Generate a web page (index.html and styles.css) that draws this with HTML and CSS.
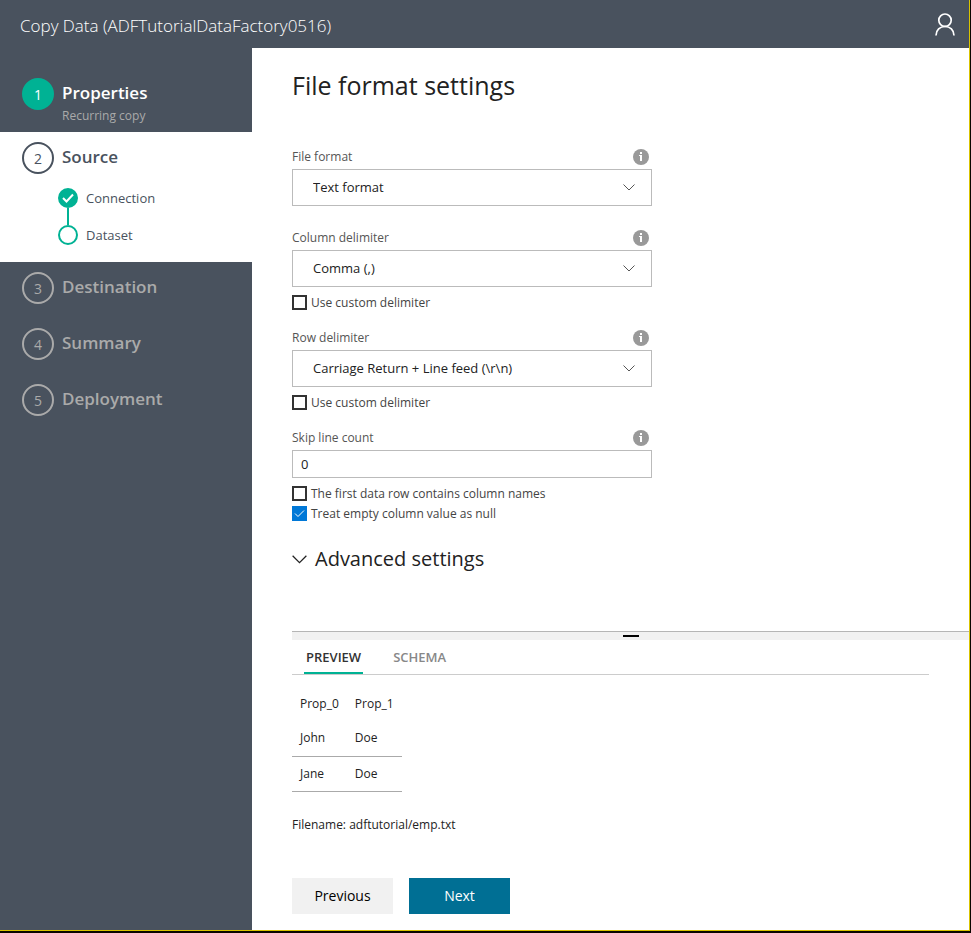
FILE: index.html
```html
<!DOCTYPE html>
<html lang="en">
<head>
<meta charset="utf-8">
<title>Copy Data</title>
<link rel="stylesheet" href="styles.css">
</head>
<body>
<svg class="sprite" aria-hidden="true">
  <symbol id="info" viewBox="0 0 16 16"><circle cx="8" cy="8" r="8" fill="#999"/><rect x="7" y="3" width="2" height="2" fill="#fff"/><path d="M6 6h3v6H7V7H6z" fill="#fff"/></symbol>
  <symbol id="chevron" viewBox="0 0 12 7"><path d="M.5.5 6 6 11.500.5" fill="none" stroke="currentColor"/></symbol>
</svg>
<div class="window">
  <header class="topbar">
    <div class="topbar-title">Copy Data (ADFTutorialDataFactory0516)</div>
    <button class="user" type="button" aria-label="Account">
      <svg width="20" height="23" viewBox="0 0 20 23" fill="none" stroke="#fff" stroke-width="1.700"><circle cx="10" cy="7.200" r="6.200"/><path d="M1 22.500c0-5.500 4-9 9-9s9 3.500 9 9"/></svg>
    </button>
  </header>
  <div class="body">
    <nav class="sidebar" aria-label="Steps">
      <ol class="steps">
        <li class="step done"><span class="num">1</span><div class="step-text"><div class="step-name">Properties</div><div class="step-note">Recurring copy</div></div></li>
        <li class="step current"><span class="num">2</span><div class="step-text"><div class="step-name">Source</div>
          <ul class="substeps">
            <li class="substep checked"><span class="dot"><svg width="12" height="10" viewBox="0 0 12 10"><path d="M1 5l3.500 3.500L11 1.500" fill="none" stroke="#fff" stroke-width="2"/></svg></span>Connection</li>
            <li class="substep"><span class="dot"></span>Dataset</li>
          </ul></div></li>
        <li class="step"><span class="num">3</span><div class="step-text"><div class="step-name">Destination</div></div></li>
        <li class="step"><span class="num">4</span><div class="step-text"><div class="step-name">Summary</div></div></li>
        <li class="step"><span class="num">5</span><div class="step-text"><div class="step-name">Deployment</div></div></li>
      </ol>
    </nav>
    <main class="content">
      <h1>File format settings</h1>
      <form class="form">
        <div class="field">
          <div class="field-head"><label for="format">File format</label><svg class="info"><use href="#info"/></svg></div>
          <div class="select"><select id="format"><option>Text format</option></select><svg class="chevron"><use href="#chevron"/></svg></div>
        </div>
        <div class="field">
          <div class="field-head"><label for="column">Column delimiter</label><svg class="info"><use href="#info"/></svg></div>
          <div class="select"><select id="column"><option>Comma (,)</option></select><svg class="chevron"><use href="#chevron"/></svg></div>
          <div class="checks"><label class="check"><input type="checkbox">Use custom delimiter</label></div>
        </div>
        <div class="field">
          <div class="field-head"><label for="row">Row delimiter</label><svg class="info"><use href="#info"/></svg></div>
          <div class="select"><select id="row"><option>Carriage Return + Line feed (\r\n)</option></select><svg class="chevron"><use href="#chevron"/></svg></div>
          <div class="checks"><label class="check"><input type="checkbox">Use custom delimiter</label></div>
        </div>
        <div class="field">
          <div class="field-head"><label for="skip">Skip line count</label><svg class="info"><use href="#info"/></svg></div>
          <input class="text" id="skip" type="text" value="0">
          <div class="checks">
            <label class="check"><input type="checkbox">The first data row contains column names</label>
            <label class="check"><input type="checkbox" checked>Treat empty column value as null</label>
          </div>
        </div>
        <button class="advanced" type="button"><svg class="advanced-chevron"><use href="#chevron"/></svg>Advanced settings</button>
      </form>
      <div class="splitter"><span class="grip"></span></div>
      <section class="preview">
        <div class="tabs" role="tablist">
          <button class="tab active" type="button" role="tab" aria-selected="true">PREVIEW</button>
          <button class="tab" type="button" role="tab" aria-selected="false">SCHEMA</button>
        </div>
        <table>
          <thead><tr><th>Prop_0</th><th>Prop_1</th></tr></thead>
          <tbody><tr><td>John</td><td>Doe</td></tr><tr><td>Jane</td><td>Doe</td></tr></tbody>
        </table>
        <p class="filename">Filename: adftutorial/emp.txt</p>
      </section>
      <div class="actions"><button class="btn" type="button">Previous</button><button class="btn primary" type="button">Next</button></div>
    </main>
  </div>
</div>
</body>
</html>
```
FILE: styles.css
```css
* { box-sizing: border-box; }
body {
  margin: 0;
  min-height: 100vh;
  display: flex;
  padding: 0 1px 3px 0;
  background: #0a0600;
  color: #222;
  font: 12px/16px "Open Sans", "Noto Sans", sans-serif;
}
button, input, select { font: inherit; color: inherit; }
button { border: 0; padding: 0; background: none; }
ol, ul { list-style: none; margin: 0; padding: 0; }
.sprite { position: absolute; width: 0; height: 0; }
.window {
  flex: 1;
  display: flex;
  flex-direction: column;
  background: #fff;
  border: solid #d9c400;
  border-width: 0 1px 1px 0;
}
.topbar {
  height: 48px;
  padding: 0 14px 0 20px;
  display: flex;
  align-items: center;
  justify-content: space-between;
  background: #49525e;
  color: #fff;
}
.topbar-title { font-size: 17px; line-height: 24px; font-weight: 300; padding-top: 4px; }
.user { display: flex; }
.body { flex: 1; display: flex; }
.sidebar { width: 252px; flex: none; padding-top: 20px; background: #49525e; }
.step { display: flex; gap: 8px; padding: 10px 22px 14px; color: #aaa; }
.num {
  width: 32px;
  height: 32px;
  flex: none;
  border: 2px solid;
  border-radius: 50%;
  font-size: 14px;
  line-height: 30px;
  text-align: center;
}
.step-name { font-size: 17px; line-height: 30px; font-weight: 600; }
.step.done { color: #fff; padding-bottom: 8px; }
.done .num { background: #00b294; border-color: #00b294; }
.step-note { margin-bottom: -1px; padding-bottom: 1px; color: #aaa; }
.step.current { background: #fff; color: #49525e; padding-bottom: 17px; }
.substeps { display: grid; gap: 17px; margin: 16px 0 0 -4px; }
.substep { position: relative; display: flex; align-items: center; gap: 8px; height: 20px; font-size: 13px; }
.dot {
  display: flex;
  align-items: center;
  justify-content: center;
  width: 20px;
  height: 20px;
  border: 2px solid #00b294;
  border-radius: 50%;
}
.checked .dot { background: #00b294; }
.checked::after { content: ""; position: absolute; left: 9px; top: 20px; width: 2px; height: 17px; background: #00b294; }
.content { flex: 1; min-width: 0; padding: 20px 0 16px 40px; }
h1 { margin: 0; font-size: 25px; line-height: 34px; font-weight: 400; }
.form { max-width: 360px; padding-top: 47px; }
.field { margin-bottom: 24px; }
.field:has(.checks) { margin-bottom: 20px; }
.field-head { display: flex; justify-content: space-between; padding-right: 3px; margin-bottom: 4px; color: #555; }
.info { width: 16px; height: 16px; }
.select { position: relative; }
select {
  appearance: none;
  display: block;
  width: 100%;
  height: 37px;
  padding: 0 32px 2px 20px;
  border: 1px solid #bbb;
  border-radius: 0;
  background: #fff;
  font-size: 13px;
}
.chevron { position: absolute; right: 17px; top: 15px; width: 12px; height: 7px; color: #555; pointer-events: none; }
.text { display: block; width: 100%; height: 28px; padding: 0 8px; border: 1px solid #bbb; font-size: 13px; }
.checks { display: grid; gap: 5px; padding-top: 8px; }
.check { display: flex; align-items: center; gap: 4px; height: 15px; color: #444; }
.check input { appearance: none; width: 15px; height: 15px; margin: 0; border: 2px solid #333; background: #fff; }
.check input:checked {
  border: 0;
  background: #0078d7 url("data:image/svg+xml,%3Csvg xmlns='http://www.w3.org/2000/svg' viewBox='0 0 15 15'%3E%3Cpath d='M3 7.500l3 3 6-6' fill='none' stroke='%23fff'/%3E%3C/svg%3E");
}
.advanced { display: flex; align-items: center; gap: 8px; margin-top: 24px; font-size: 20px; line-height: 28px; }
.advanced-chevron { width: 15px; height: 9px; }
.splitter { height: 9px; margin-top: 58px; border-top: 1px solid #b5b5b5; background: #f1f1f1; }
.grip { display: block; width: 16px; height: 2px; margin: 3px auto 0; background: #000; }
.preview { margin-right: 40px; }
.tabs { display: flex; gap: 28px; height: 35px; padding: 0 12px; border-bottom: 1px solid #ccc; }
.tab { padding: 2px 2px 0; border-bottom: 2px solid transparent; color: #888; font-size: 13px; font-weight: 600; }
.tab.active { border-color: #00b294; color: #333; }
table { margin-top: 11px; border-collapse: collapse; }
th, td { height: 35px; padding: 0 8px; font-weight: 400; text-align: left; }
td { border-bottom: 1px solid #aaa; }
.filename { margin: 25px 0 45px; }
.actions { display: flex; gap: 16px; }
.btn { width: 101px; height: 36px; background: #f1f1f1; color: #000; font-size: 14px; }
.btn.primary { background: #006f94; color: #fff; }
```
